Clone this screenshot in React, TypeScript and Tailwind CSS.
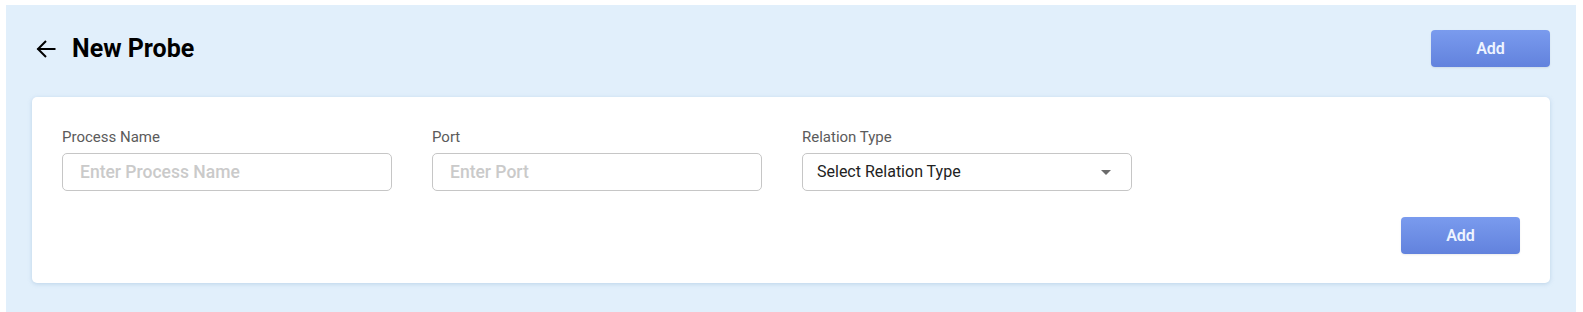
import React from "react";

function Field({ label, placeholder }: { label: string; placeholder: string }) {
  return (
    <div className="flex w-[330px] flex-col">
      <label className="mb-[6px] h-5 text-[15px] leading-5 text-[#5b5b5b]">{label}</label>
      <input
        className="h-[38px] w-full rounded-[5px] border border-[#c6c6c6] bg-white px-[17px] text-[17.5px] font-medium text-[#222] outline-none placeholder:text-[#cacaca]"
        placeholder={placeholder}
      />
    </div>
  );
}

function AddButton() {
  return (
    <button className="h-[37px] w-[119px] rounded-[4px] bg-gradient-to-b from-[#7a9bee] to-[#6282dd] text-[16px] font-semibold text-[#eef4ff] shadow-[0_1px_2px_rgba(0,0,0,0.08)]">
      Add
    </button>
  );
}

export default function App() {
  return (
    <div
      className="bg-white pl-[6px] pr-[7px] pt-[5px]"
      style={{ fontFamily: "Roboto, 'Noto Sans', sans-serif" }}
    >
      <div className="bg-[#e1effb] px-[26px] pb-[29px] pt-[25px]">
        <div className="flex h-[37px] items-center justify-between pl-[4px]">
          <div className="flex items-center gap-[16px]">
            <svg width="20" height="20" viewBox="0 0 20 20" fill="none" stroke="#000" strokeWidth="2" strokeLinecap="square">
              <path d="M18.5 10H2.5" />
              <path d="M10 2L2 10L10 18" strokeLinecap="butt" />
            </svg>
            <h1 className="text-[25px] font-bold leading-none text-black">New Probe</h1>
          </div>
          <AddButton />
        </div>
        <div className="mt-[30px] rounded-[5px] bg-white px-[30px] pb-[29px] pt-[30px] shadow-[0_1px_4px_rgba(120,160,200,0.35)]">
          <div className="flex gap-[40px]">
            <Field label="Process Name" placeholder="Enter Process Name" />
            <Field label="Port" placeholder="Enter Port" />
            <div className="flex w-[330px] flex-col">
              <label className="mb-[6px] h-5 text-[15px] leading-5 text-[#5b5b5b]">Relation Type</label>
              <div className="flex h-[38px] items-center justify-between rounded-[5px] border border-[#c6c6c6] bg-white pl-[14px] pr-[20px]">
                <span className="text-[16px] text-[#222]">Select Relation Type</span>
                <svg width="10" height="5" viewBox="0 0 10 5">
                  <path d="M0 0H10L5 5Z" fill="#6b6b6b" />
                </svg>
              </div>
            </div>
          </div>
          <div className="mt-[26px] flex justify-end">
            <AddButton />
          </div>
        </div>
      </div>
    </div>
  );
}
